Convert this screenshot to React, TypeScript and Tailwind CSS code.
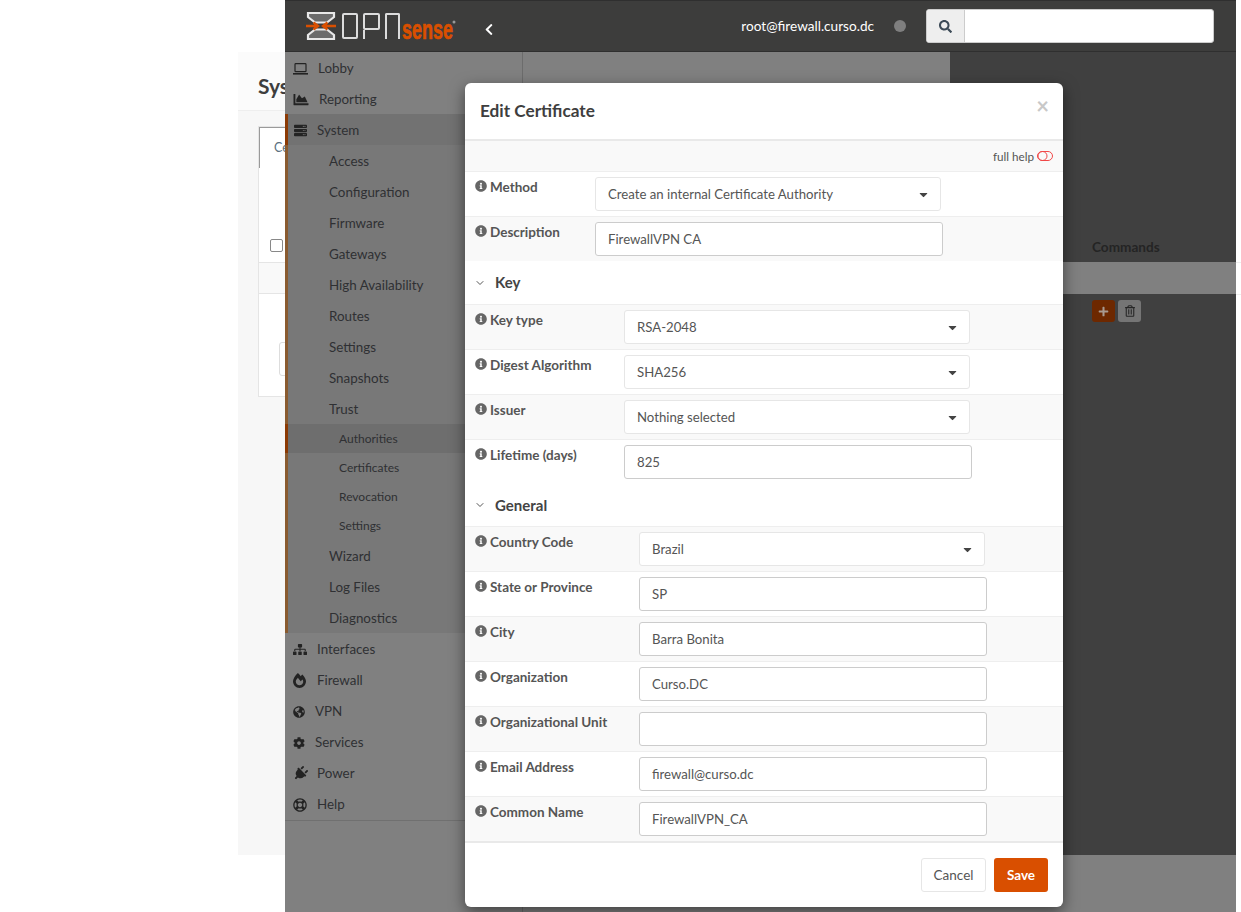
import { ChevronDown } from "lucide-react";
import {
  FaCaretDown,
  FaChartArea,
  FaChevronLeft,
  FaCog,
  FaFireAlt,
  FaGlobeAmericas,
  FaInfoCircle,
  FaPlug,
  FaPlus,
  FaRegLifeRing,
  FaRegTrashAlt,
  FaSearch,
  FaServer,
  FaSitemap,
} from "react-icons/fa";

const font = "font-['Lato','Noto_Sans',sans-serif]";

function Logo() {
  return (
    <div className="flex items-center w-[150px] h-[30px] shrink-0" aria-label="OPNsense">
      <svg width="30" height="30" viewBox="0 0 30 30" fill="none" className="shrink-0">
        <path d="M2 2H28V6L21 11.5H9L2 6Z" stroke="#e8e8e8" strokeWidth="2.2" fill="#6b6b6b" />
        <path d="M2 28H28V24L21 18.5H9L2 24Z" stroke="#e8e8e8" strokeWidth="2.2" fill="#6b6b6b" />
        <path d="M0 15H11M7.5 11.5L12 15L7.5 18.5M30 15H18M21.5 11.5L17 15L21.5 18.5" stroke="#d94f00" strokeWidth="2.4" />
      </svg>
      <div className="flex items-start ml-[6px] gap-[5px] h-[26px] shrink-0">
        <div className="w-[16px] h-[26px] border-2 border-[#dcdcdc] rounded-[2px]" />
        <div className="w-[17px] h-[26px] flex flex-col">
          <div className="h-[17px] border-2 border-[#dcdcdc] rounded-[2px]" />
          <div className="w-[2px] h-[9px] bg-[#dcdcdc]" />
        </div>
        <div className="w-[15px] h-[26px] border-2 border-b-0 border-[#dcdcdc] rounded-t-[2px]" />
      </div>
      <svg width="54" height="30" viewBox="0 0 54 30" className="ml-[2px] shrink-0 overflow-visible">
        <text x="0" y="28" fontFamily="Liberation Sans" fontWeight="700" fontSize="28" fill="#d94f00" stroke="#d94f00" strokeWidth="0.7" textLength="51" lengthAdjust="spacingAndGlyphs">
          sense
        </text>
        <circle cx="52" cy="11" r="1.5" fill="#999" />
      </svg>
    </div>
  );
}

function Header() {
  return (
    <header className="h-[52px] shrink-0 flex items-center bg-[#3d3d3c] border-y border-[#2f2f2f] pl-[21px] pr-[22px]">
      <Logo />
      <FaChevronLeft className="ml-[28px] mt-[6px] text-white w-[10px] h-[13px]" />
      <span className="ml-auto text-white text-[13.6px]">root@firewall.curso.dc</span>
      <span className="ml-[20px] w-[12px] h-[12px] rounded-full bg-[#7f7f7f]" />
      <div className="ml-[20px] flex w-[288px] h-[34px] rounded-[3px] overflow-hidden border border-[#ccc] bg-white">
        <div className="w-[38px] bg-[#eeeeee] border-r border-[#ccc] flex items-center justify-center">
          <FaSearch className="w-[13px] h-[13px] text-[#3c4a57]" />
        </div>
      </div>
    </header>
  );
}

function LaptopIcon({ className }: { className?: string }) {
  return (
    <svg viewBox="0 0 15 12" fill="none" stroke="currentColor" className={className}>
      <rect x="2" y="0.7" width="11" height="8" rx="0.8" strokeWidth="1.2" />
      <path d="M0 10.8H15" strokeWidth="1.6" />
    </svg>
  );
}

const topBefore = [
  { label: "Lobby", Icon: LaptopIcon, cls: "w-[15px] h-[12px] mr-[10px]" },
  { label: "Reporting", Icon: FaChartArea, cls: "w-[16px] h-[15px] mr-[10px]" },
];

const systemItems = ["Access", "Configuration", "Firmware", "Gateways", "High Availability", "Routes", "Settings", "Snapshots", "Trust"];
const trustItems = ["Authorities", "Certificates", "Revocation", "Settings"];
const systemAfter = ["Wizard", "Log Files", "Diagnostics"];

const topAfter = [
  { label: "Interfaces", Icon: FaSitemap, cls: "w-[14px] h-[13px] mr-[10px]" },
  { label: "Firewall", Icon: FaFireAlt, cls: "w-[13px] h-[15px] mr-[11px]" },
  { label: "VPN", Icon: FaGlobeAmericas, cls: "w-[12px] h-[12px] mr-[10px]" },
  { label: "Services", Icon: FaCog, cls: "w-[12px] h-[12px] mr-[10px]" },
  { label: "Power", Icon: FaPlug, cls: "w-[15px] h-[15px] mr-[9px] rotate-45" },
  { label: "Help", Icon: FaRegLifeRing, cls: "w-[14px] h-[14px] mr-[10px]" },
];

function TopItem({ label, Icon, cls }: { label: string; Icon: React.ComponentType<{ className?: string }>; cls: string }) {
  return (
    <div className="h-[31px] flex items-center pt-[2px] pl-[8px] text-[13.4px] text-[#2f3033]">
      <Icon className={`shrink-0 text-[#232323] ${cls}`} />
      <span>{label}</span>
    </div>
  );
}

function Sidebar() {
  return (
    <aside className="w-[238px] shrink-0 bg-[#808080] border-r border-[#6c6c6c]">
      {topBefore.map((i) => (
        <TopItem key={i.label} {...i} />
      ))}
      <div className="border-l-[3px] border-[#8a5b30] bg-[#787878]">
        <div className="-ml-[3px] border-l-[3px] border-[#8c3a04] bg-[#727272] h-[31px] flex items-center pt-[2px] pl-[5px] text-[13.4px] text-[#2f3033]">
          <FaServer className="w-[15px] h-[13px] mr-[9px] text-[#232323]" />
          <span>System</span>
        </div>
        {systemItems.map((s) => (
          <div key={s} className="h-[31px] flex items-center pt-[2px] pl-[41px] text-[13.4px] text-[#2f3033]">
            {s}
          </div>
        ))}
        {trustItems.map((s) => (
          <div
            key={s}
            className={
              s === "Authorities"
                ? "-ml-[3px] border-l-[3px] border-[#8c3a04] bg-[#6e6e6e] h-[29px] flex items-center pl-[51px] text-[12px] text-[#2f3033]"
                : "h-[29px] flex items-center pl-[51px] text-[12px] text-[#2f3033]"
            }
          >
            {s}
          </div>
        ))}
        {systemAfter.map((s) => (
          <div key={s} className="h-[31px] flex items-center pt-[2px] pl-[41px] text-[13.4px] text-[#2f3033]">
            {s}
          </div>
        ))}
      </div>
      <div className="border-b border-[#707070] pb-[1px]">
        {topAfter.map((i) => (
          <TopItem key={i.label} {...i} />
        ))}
      </div>
    </aside>
  );
}

function Info() {
  return <FaInfoCircle className="w-[12px] h-[12px] text-[#666] shrink-0 mr-[3px] mt-[3px]" />;
}

function Row({ label, labelCls, shaded, children }: { label: string; labelCls: string; shaded?: boolean; children: React.ReactNode }) {
  return (
    <div className={`h-[45px] flex border-b border-[#eeeeee] ${shaded ? "bg-[#f9f9f9]" : "bg-white"}`}>
      <div className={`pl-[10px] pt-[5px] flex items-start font-bold text-[13.5px] text-[#555] shrink-0 ${labelCls}`}>
        <Info />
        <span>{label}</span>
      </div>
      <div className="pt-[5px]">{children}</div>
    </div>
  );
}

function Select({ value }: { value: string }) {
  return (
    <div className="w-[346px] h-[34px] bg-white border border-[#e6e6e6] rounded-[3px] flex items-center justify-between pl-[12px] pr-[10px] text-[13.2px] text-[#555]">
      <span className="pt-[2px]">{value}</span>
      <FaCaretDown className="w-[13px] h-[13px] text-[#444]" />
    </div>
  );
}

function Input({ value }: { value: string }) {
  return (
    <div className="w-[348px] h-[34px] bg-white border border-[#cccccc] rounded-[3px] flex items-center pl-[12px] pt-[2px] text-[13.2px] text-[#555]">
      {value}
    </div>
  );
}

function Section({ title, h }: { title: string; h: string }) {
  return (
    <div className={`flex items-center pl-[10px] border-b border-[#eeeeee] bg-white ${h}`}>
      <ChevronDown className="w-[12px] h-[12px] text-[#555] mr-[8px] ml-[-1px]" />
      <span className="ml-[1px] font-bold text-[15px] text-[#444]">{title}</span>
    </div>
  );
}

function Modal() {
  return (
    <div className="absolute left-[465px] top-[83px] w-[598px] h-[824px] bg-white rounded-[6px] shadow-[0_5px_15px_rgba(0,0,0,0.5)] flex flex-col overflow-hidden">
      <div className="h-[58px] shrink-0 flex justify-between pl-[15px] pr-[14px] border-b-2 border-[#e9e9e9]">
        <h2 className="pt-[15px] text-[17.2px] font-bold text-[#3e3e3e]">Edit Certificate</h2>
        <span className="pt-[8px] text-[22px] font-bold leading-[30px] text-[#c8c8c8]">×</span>
      </div>
      <div className="h-[31px] shrink-0 bg-[#f9f9f9] border-b border-[#eeeeee] flex items-center justify-end pr-[10px] text-[11.7px] text-[#555]">
        <span className="mr-[3px] pt-[2px]">full help</span>
        <svg width="16" height="10" viewBox="0 0 16 10" fill="none" stroke="#f04848" strokeWidth="1">
          <rect x="0.5" y="0.5" width="15" height="9" rx="4.5" />
          <circle cx="5.5" cy="5" r="4.5" />
        </svg>
      </div>

      <Row label="Method" labelCls="w-[130px]">
        <Select value="Create an internal Certificate Authority" />
      </Row>
      <div className="h-[44px] flex bg-[#f9f9f9]">
        <div className="w-[130px] pl-[10px] pt-[5px] flex items-start font-bold text-[13.5px] text-[#555] shrink-0">
          <Info />
          <span>Description</span>
        </div>
        <div className="pt-[5px]">
          <Input value="FirewallVPN CA" />
        </div>
      </div>

      <Section title="Key" h="h-[44px]" />
      <Row label="Key type" labelCls="w-[159px]" shaded>
        <Select value="RSA-2048" />
      </Row>
      <Row label="Digest Algorithm" labelCls="w-[159px]">
        <Select value="SHA256" />
      </Row>
      <Row label="Issuer" labelCls="w-[159px]" shaded>
        <Select value="Nothing selected" />
      </Row>
      <div className="h-[44px] flex bg-white">
        <div className="w-[159px] pl-[10px] pt-[5px] flex items-start font-bold text-[13.5px] text-[#555] shrink-0">
          <Info />
          <span>Lifetime (days)</span>
        </div>
        <div className="pt-[5px]">
          <Input value="825" />
        </div>
      </div>

      <Section title="General" h="h-[43px]" />
      <Row label="Country Code" labelCls="w-[174px]" shaded>
        <Select value="Brazil" />
      </Row>
      <Row label="State or Province" labelCls="w-[174px]">
        <Input value="SP" />
      </Row>
      <Row label="City" labelCls="w-[174px]" shaded>
        <Input value="Barra Bonita" />
      </Row>
      <Row label="Organization" labelCls="w-[174px]">
        <Input value="Curso.DC" />
      </Row>
      <Row label="Organizational Unit" labelCls="w-[174px]" shaded>
        <Input value="" />
      </Row>
      <Row label="Email Address" labelCls="w-[174px]">
        <Input value="firewall@curso.dc" />
      </Row>
      <div className="h-[46px] flex bg-[#f9f9f9] border-b-2 border-[#e9e9e9]">
        <div className="w-[174px] pl-[10px] pt-[5px] flex items-start font-bold text-[13.5px] text-[#555] shrink-0">
          <Info />
          <span>Common Name</span>
        </div>
        <div className="pt-[5px]">
          <Input value="FirewallVPN_CA" />
        </div>
      </div>

      <div className="flex-1 flex justify-end items-start gap-[8px] pt-[15px] pr-[15px]">
        <button className="w-[65px] h-[34px] bg-white border border-[#e6e6e6] rounded-[3px] text-[13.5px] text-[#555]">Cancel</button>
        <button className="w-[54px] h-[34px] bg-[#d94f00] rounded-[3px] text-[13.5px] font-bold text-white">Save</button>
      </div>
    </div>
  );
}

// sliver of the undimmed page that shows left of the sidebar
function PageStrip() {
  return (
    <div className="w-[47px] shrink-0 h-[803px] mt-[52px] bg-[#f7f7f7] overflow-hidden">
      <div className="h-[59px] bg-[#fbfbfb] border-b border-[#eeeeee] pl-[20px] pt-[18px] text-[21px] font-bold text-[#3e3e3e] whitespace-nowrap">
        Sys
      </div>
      <div className="ml-[20px] mt-[15px] w-[200px] h-[271px] bg-white border border-[#e5e5e5]">
        <div className="h-[41px] border-l border-t border-[#9a9a9a] pl-[14px] pt-[11px] text-[12.5px] text-[#5a6f80]">Ce</div>
        <div className="h-[94px] flex items-end pl-[11px]">
          <div className="w-[13px] h-[13px] mb-[10px] bg-white border border-[#888] rounded-[2px]" />
        </div>
        <div className="h-[32px] bg-[#f9f9f9] border-y border-[#e5e5e5]" />
        <div className="mt-[48px] ml-[20px] w-[100px] h-[34px] border border-[#dddddd] rounded-[3px]" />
      </div>
    </div>
  );
}

export default function App() {
  return (
    <div className={`relative w-[1241px] h-[912px] overflow-hidden bg-white flex ${font}`}>
      <div className="w-[238px] shrink-0" />
      <PageStrip />
      <div className="w-[951px] shrink-0 flex flex-col h-[912px]">
        <Header />
        <div className="flex flex-1 min-h-0">
          <Sidebar />
          <div className="flex-1 flex flex-col">
            <div className="h-[803px] shrink-0 flex">
              <div className="w-[427px] bg-[#808080]" />
              <div className="flex-1 bg-[#404040] flex flex-col">
                <div className="h-[210px] flex items-end pl-[142px] pb-[5px] text-[13.6px] font-bold text-[#242424]">Commands</div>
                <div className="h-[32px] bg-[#808080]" />
                <div className="flex gap-[3px] pl-[142px] pt-[6px]">
                  <div className="w-[23px] h-[22px] rounded-[3px] bg-[#6d2800] flex items-center justify-center">
                    <FaPlus className="w-[11px] h-[11px] text-[#a89a90]" />
                  </div>
                  <div className="w-[23px] h-[22px] rounded-[3px] bg-[#757575] flex items-center justify-center">
                    <FaRegTrashAlt className="w-[10px] h-[12px] text-[#262626]" />
                  </div>
                </div>
              </div>
            </div>
            <div className="flex-1 bg-[#808080]" />
          </div>
        </div>
      </div>
      <div className="flex-1 pt-[262px]">
        <div className="h-[33px] border-y border-[#eeeeee]" />
      </div>
      <Modal />
    </div>
  );
}
